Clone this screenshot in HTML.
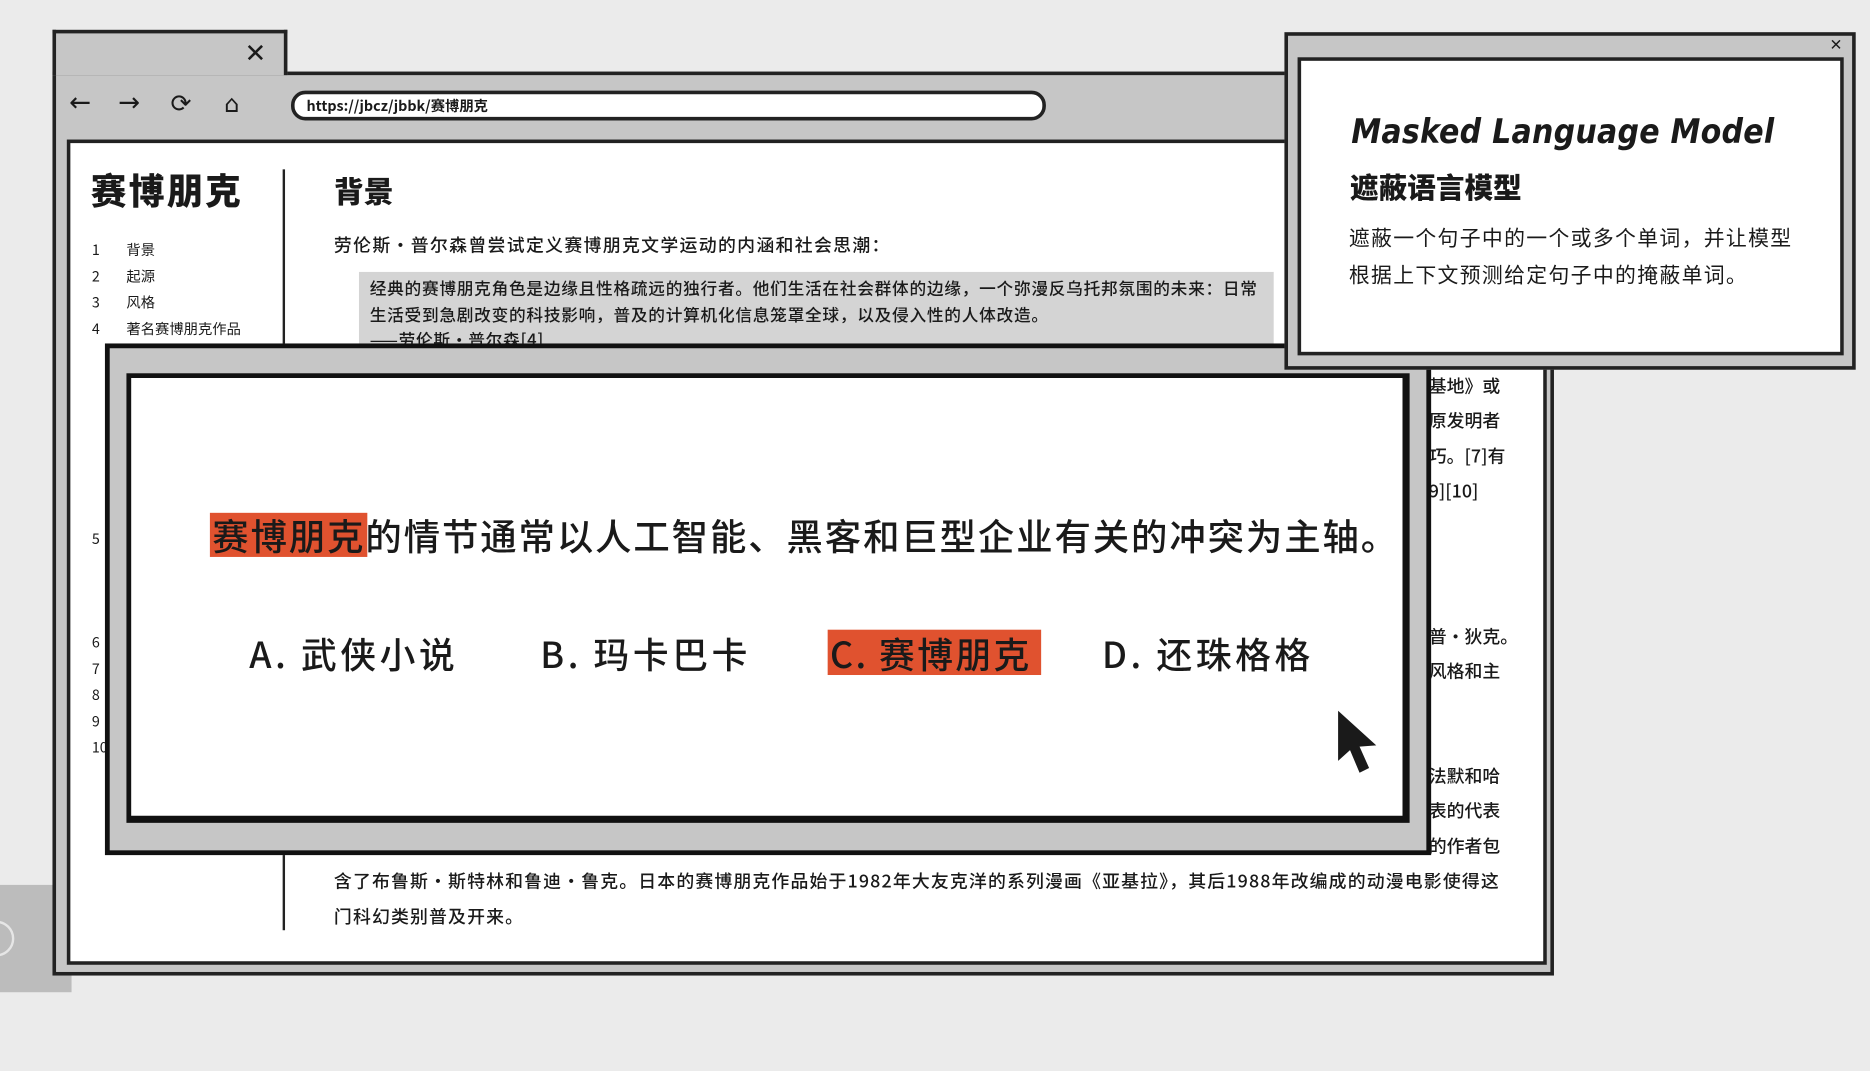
<!DOCTYPE html>
<html><head><meta charset="utf-8">
<style>
html,body{margin:0;padding:0;background:#ebebeb;overflow:hidden;}
body{width:1870px;height:1071px;position:relative;}
#s{position:absolute;left:0;top:0;width:1568px;height:898px;transform:scale(1.19260);transform-origin:0 0;font-family:"Liberation Sans","Noto Sans CJK SC",sans-serif;color:#1a1a1a;}
.a{position:absolute;}
.cj{font-family:"Noto Sans CJK SC","Liberation Sans",sans-serif;}
.t{white-space:nowrap;}
</style></head><body>
<div id="s">
  <div class="a" style="left:0;top:742px;width:60px;height:90px;background:#bcbcbc;"></div>
  <div class="a" style="left:-18px;top:772px;width:26px;height:26px;border:2px solid #e6e6e6;border-radius:50%;"></div>

  <div class="a" style="left:44px;top:60px;width:1259px;height:758px;background:#c6c6c6;border:3px solid #222;box-sizing:border-box;"></div>
  <div class="a" style="left:44px;top:25px;width:197px;height:38px;background:#c6c6c6;border:3px solid #222;border-bottom:none;box-sizing:border-box;"></div>
  <div class="a t" style="left:205px;top:30px;font-size:22px;line-height:30px;">✕</div>
  <div class="a t" style="left:58px;top:74px;font-size:22px;line-height:26px;font-family:'DejaVu Sans',sans-serif;">←</div>
  <div class="a t" style="left:99px;top:74px;font-size:22px;line-height:26px;font-family:'DejaVu Sans',sans-serif;">→</div>
  <div class="a t" style="left:143px;top:74px;font-size:21px;line-height:26px;font-family:'DejaVu Sans',sans-serif;">⟳</div>
  <div class="a t" style="left:188px;top:74px;font-size:20px;line-height:26px;font-family:'DejaVu Sans',sans-serif;">⌂</div>
  <div class="a" style="left:244px;top:76px;width:633px;height:25px;background:#fff;border:3px solid #222;border-radius:12px;box-sizing:border-box;"></div>
  <div class="a t cj" style="left:257px;top:80px;font-size:12px;line-height:17px;font-weight:700;">https://jbcz/jbbk/赛博朋克</div>

  <div class="a" style="left:56px;top:117px;width:1241px;height:692px;background:#fff;border:3px solid #222;box-sizing:border-box;"></div>
  <div class="a t cj" style="left:76px;top:138px;font-size:30px;line-height:40px;font-weight:900;letter-spacing:2px;">赛博朋克</div>
  <div class="a" style="left:237px;top:142px;width:2px;height:638px;background:#222;"></div>
  <div class="a cj" style="left:77px;top:199px;font-size:12px;line-height:22px;">
    <div><span style="display:inline-block;width:29px">1</span>背景</div>
    <div><span style="display:inline-block;width:29px">2</span>起源</div>
    <div><span style="display:inline-block;width:29px">3</span>风格</div>
    <div><span style="display:inline-block;width:29px">4</span>著名赛博朋克作品</div>
  </div>
  <div class="a cj" style="left:77px;top:441px;font-size:12px;line-height:22px;">5</div>
  <div class="a cj" style="left:77px;top:528px;font-size:12px;line-height:22px;">6<br>7<br>8<br>9<br>10</div>

  <div class="a t cj" style="left:280px;top:143px;font-size:25px;line-height:34px;font-weight:900;">背景</div>
  <div class="a t cj" style="left:280px;top:195px;font-size:15px;line-height:22px;font-weight:500;letter-spacing:1.1px;">劳伦斯·普尔森曾尝试定义赛博朋克文学运动的内涵和社会思潮：</div>
  <div class="a" style="left:301px;top:228px;width:767px;height:62px;background:#d4d4d4;"></div>
  <div class="a t cj" style="left:310px;top:232px;font-size:14px;line-height:21.5px;font-weight:500;letter-spacing:0.6px;">经典的赛博朋克角色是边缘且性格疏远的独行者。他们生活在社会群体的边缘，一个弥漫反乌托邦氛围的未来：日常<br>生活受到急剧改变的科技影响，普及的计算机化信息笼罩全球，以及侵入性的人体改造。<br>——劳伦斯·普尔森[4]</div>

  <div class="a t cj" style="left:1198px;top:309px;font-size:15px;line-height:29.3px;font-weight:500;">基地》或<br>原发明者<br>巧。[7]有<br>9][10]</div>
  <div class="a t cj" style="left:1198px;top:519px;font-size:15px;line-height:29px;font-weight:500;">普·狄克。<br>风格和主</div>
  <div class="a t cj" style="left:1198px;top:636px;font-size:15px;line-height:29.3px;font-weight:500;">法默和哈<br>表的代表<br>的作者包</div>
  <div class="a t cj" style="left:280px;top:724px;font-size:15px;line-height:29.5px;font-weight:500;letter-spacing:0.95px;">含了布鲁斯·斯特林和鲁迪·鲁克。日本的赛博朋克作品始于1982年大友克洋的系列漫画《亚基拉》，其后1988年改编成的动漫电影使得这<br>门科幻类别普及开来。</div>

  <div class="a" style="left:88px;top:288px;width:1112px;height:429px;background:#c6c6c6;border:4px solid #111;box-sizing:border-box;"></div>
  <div class="a" style="left:106px;top:313px;width:1076px;height:377px;background:#fff;border:4px solid #111;border-right-width:6px;border-bottom-width:6px;box-sizing:border-box;"></div>
  <div class="a" style="left:176px;top:430px;width:132px;height:37px;background:#e0522f;"></div>
  <div class="a t cj" style="left:178px;top:427px;font-size:30.5px;line-height:42px;font-weight:500;letter-spacing:1.6px;">赛博朋克的情节通常以人工智能、黑客和巨型企业有关的冲突为主轴。</div>
  <div class="a" style="left:694px;top:528px;width:179px;height:38px;background:#e0522f;"></div>
  <div class="a t cj" style="left:209px;top:526px;font-size:30px;line-height:42px;font-weight:500;letter-spacing:3px;">A. 武侠小说</div>
  <div class="a t cj" style="left:453px;top:526px;font-size:30px;line-height:42px;font-weight:500;letter-spacing:3px;">B. 玛卡巴卡</div>
  <div class="a t cj" style="left:696px;top:526px;font-size:30px;line-height:42px;font-weight:500;letter-spacing:2px;">C. 赛博朋克</div>
  <div class="a t cj" style="left:924px;top:526px;font-size:30px;line-height:42px;font-weight:500;letter-spacing:3px;">D. 还珠格格</div>
  <svg class="a" style="left:1112px;top:588px;" width="56" height="70" viewBox="0 0 56 70">
    <path d="M10 8 L10 50 L20 41 L28 60 L36 56 L28 38 L42 37 Z" fill="#fff" stroke="#fff" stroke-width="6" stroke-linejoin="round" opacity="0.9"/>
    <path d="M10 8 L10 50 L20 41 L28 60 L36 56 L28 38 L42 37 Z" fill="#1a1a1a"/>
  </svg>

  <div class="a" style="left:1077px;top:27px;width:479px;height:283px;background:#c6c6c6;border:3px solid #222;box-sizing:border-box;"></div>
  <div class="a t" style="left:1534px;top:30px;font-size:13px;line-height:16px;">✕</div>
  <div class="a" style="left:1088px;top:48px;width:458px;height:250px;background:#fff;border:3px solid #222;box-sizing:border-box;"></div>
  <div class="a t" style="left:1133px;top:91px;font-size:28px;line-height:40px;font-weight:700;font-style:italic;letter-spacing:0.2px;font-family:'DejaVu Sans Condensed','Liberation Sans',sans-serif;">Masked Language Model</div>
  <div class="a t cj" style="left:1132px;top:139px;font-size:24px;line-height:34px;font-weight:900;">遮蔽语言模型</div>
  <div class="a t cj" style="left:1131px;top:184px;font-size:17.5px;line-height:31px;letter-spacing:1.1px;">遮蔽一个句子中的一个或多个单词，并让模型<br>根据上下文预测给定句子中的掩蔽单词。</div>
</div>
</body></html>
